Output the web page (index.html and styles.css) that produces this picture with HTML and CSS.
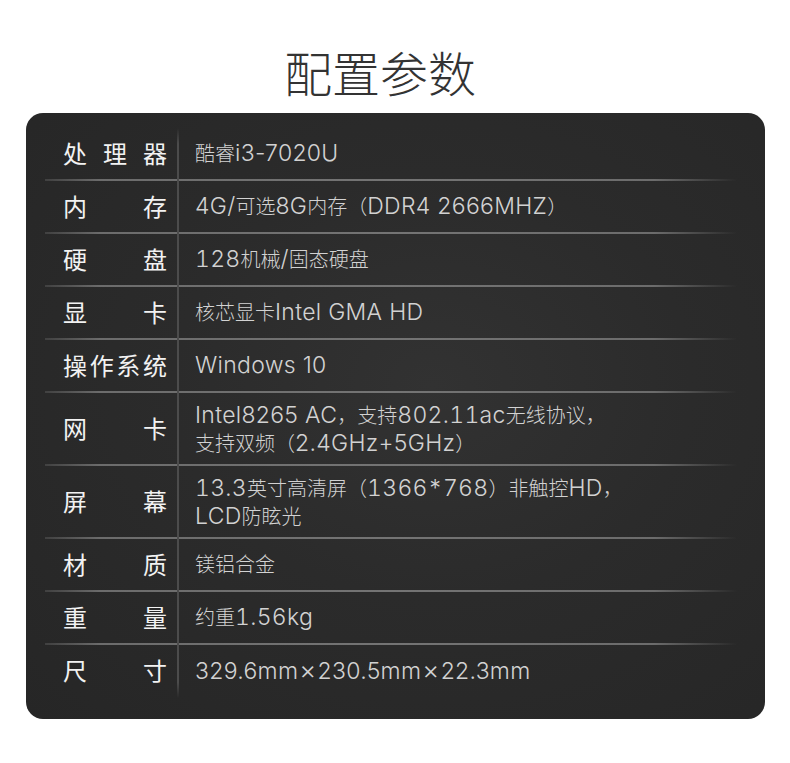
FILE: index.html
```html
<!DOCTYPE html>
<html lang="zh-CN">
<head>
<meta charset="utf-8">
<title>配置参数</title>
<link rel="stylesheet" href="styles.css">
</head>
<body>
<h1 class="title">配置参数</h1>
<section class="card">
  <div class="row first"><div class="label">处 理 器</div><div class="value">酷睿<span class="en">i3-7020U</span></div></div>
  <div class="row"><div class="label">内存</div><div class="value"><span class="en">4G/</span>可选<span class="en">8G</span>内存（<span class="en">DDR4 2666MHZ</span>）</div></div>
  <div class="row"><div class="label">硬盘</div><div class="value"><span class="en tn">128</span>机械<span class="en">/</span>固态硬盘</div></div>
  <div class="row"><div class="label">显卡</div><div class="value">核芯显卡<span class="en">Intel GMA HD</span></div></div>
  <div class="row"><div class="label">操作系统</div><div class="value"><span class="en">Windows 10</span></div></div>
  <div class="row tall"><div class="label">网卡</div><div class="value"><span class="en">Intel8265 AC</span>，支持<span class="en tn">802.11ac</span>无线协议，<br>支持双频（<span class="en">2.4GHz+5GHz</span>）</div></div>
  <div class="row tall"><div class="label">屏幕</div><div class="value"><span class="en tn">13.3</span>英寸高清屏（<span class="en tn">1366*768</span>）非触控<span class="en">HD</span>，<br><span class="en">LCD</span>防眩光</div></div>
  <div class="row"><div class="label">材质</div><div class="value">镁铝合金</div></div>
  <div class="row"><div class="label">重量</div><div class="value">约重<span class="en tn">1.56kg</span></div></div>
  <div class="row last"><div class="label">尺寸</div><div class="value"><span class="en">329.6mm<span class="x">×</span>230.5mm<span class="x">×</span>22.3mm</span></div></div>
</section>
</body>
</html>
```
FILE: styles.css
```css
html, body {
  margin: 0;
  padding: 0;
  background: #ffffff;
}
body {
  width: 790px;
  font-family: "Noto Sans CJK SC", sans-serif;
}
.title {
  margin: 41px 30px 12px 0;
  height: 60px;
  line-height: 60px;
  text-align: center;
  font-family: "Noto Sans CJK SC", sans-serif;
  font-size: 48px;
  font-weight: 300;
  color: #333333;
}
.card {
  margin: 0 25px 0 26px;
  padding: 15px 28px 21px 19px;
  border-radius: 17px;
  background:
    radial-gradient(ellipse at 55% 45%, #323232 0%, #2b2b2b 45%, #262626 100%);
}
.row {
  display: flex;
  align-items: stretch;
  height: 53px;
  background-image: linear-gradient(90deg, rgba(110,110,110,0.35) 0%, #6c6c6c 8%, #747474 50%, #6c6c6c 88%, rgba(110,110,110,0) 100%);
  background-size: 100% 2px;
  background-position: left bottom;
  background-repeat: no-repeat;
}
.row.tall {
  height: 73px;
}
.row.last {
  background-image: none;
}
.label {
  width: 104px;
  margin-left: 18px;
  margin-right: 10px;
  padding-top: 10px;
  font-size: 24px;
  line-height: 30px;
  color: #f2f2f2;
  text-align: justify;
  text-align-last: justify;
}
.row.tall .label {
  padding-top: 20px;
}
.value {
  flex: 1;
  padding-left: 18px;
  padding-top: 11px;
  font-size: 20px;
  line-height: 28px;
  font-weight: 300;
  color: #d2d2d2;
  background-image: linear-gradient(#4c4c4c, #4c4c4c);
  background-size: 2px 100%;
  background-position: left top;
  background-repeat: no-repeat;
}
.row.tall .value {
  padding-top: 8px;
}
.en {
  font-family: Inter, "Noto Sans", sans-serif;
  font-size: 23px;
  font-weight: 300;
  letter-spacing: 0.3px;
}
.tn {
  font-variant-numeric: tabular-nums;
}
.x {
  font-size: 26px;
  margin: 0 1px;
}
.row.first .value {
  background-image: linear-gradient(rgba(76,76,76,0) 0%, #4c4c4c 30%, #4c4c4c 100%);
}
.row.last .value {
  background-image: linear-gradient(#4c4c4c 0%, #4c4c4c 70%, rgba(76,76,76,0) 100%);
}
```
